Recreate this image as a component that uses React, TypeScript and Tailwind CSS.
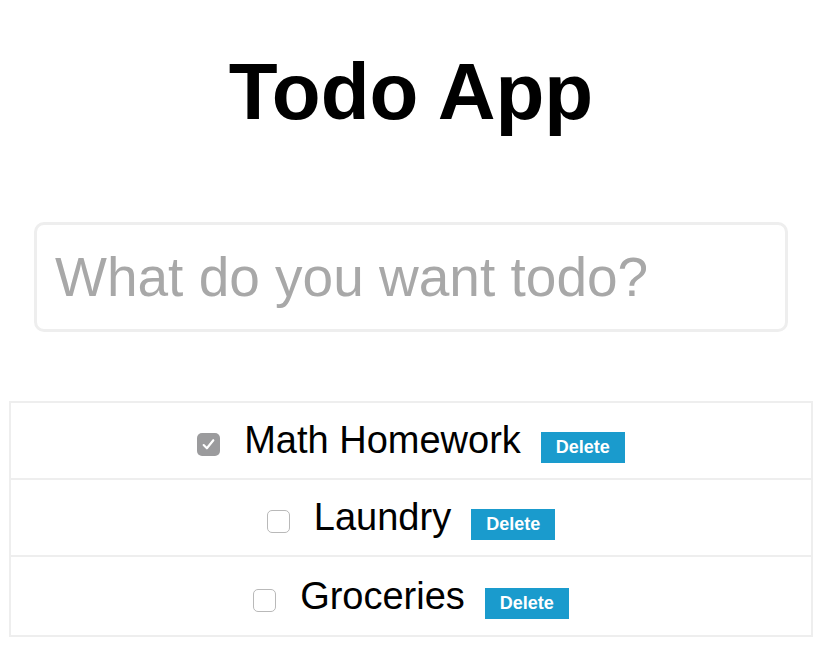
import { useState } from 'react';

type Todo = { id: number; text: string; done: boolean };

const initialTodos: Todo[] = [
  { id: 1, text: 'Math Homework', done: true },
  { id: 2, text: 'Laundry', done: false },
  { id: 3, text: 'Groceries', done: false },
];

function CheckBox({ checked, onToggle }: { checked: boolean; onToggle: () => void }) {
  return (
    <button
      onClick={onToggle}
      className={
        checked
          ? 'w-[23px] h-[23px] rounded-[5px] bg-[#9b9b9d] flex items-center justify-center'
          : 'w-[23px] h-[23px] rounded-[5px] bg-white border border-[#b9b9b9] flex items-center justify-center'
      }
    >
      {checked && (
        <svg width="15" height="15" viewBox="0 0 14 14" fill="none">
          <path d="M2.5 7.5 L5.5 10.5 L11.5 3" stroke="white" strokeWidth="2" strokeLinecap="round" strokeLinejoin="round" />
        </svg>
      )}
    </button>
  );
}

export default function App() {
  const [todos, setTodos] = useState<Todo[]>(initialTodos);
  const [text, setText] = useState('');

  const toggle = (id: number) =>
    setTodos(prev => prev.map(t => (t.id === id ? { ...t, done: !t.done } : t)));

  const remove = (id: number) => setTodos(prev => prev.filter(t => t.id !== id));

  return (
    <div className="min-h-screen bg-white text-black font-['Liberation_Sans',Arial,sans-serif]">
      {/* Title */}
      <h1 className="pt-[52px] text-center text-[80px] leading-none font-bold">Todo App</h1>

      {/* Input */}
      <div className="px-[34px] mt-[90px]">
        <input
          value={text}
          onChange={e => setText(e.target.value)}
          placeholder="What do you want todo?"
          className="w-full h-[110px] border-[3px] border-[#eeeeee] rounded-[10px] px-[18px] text-[55px] text-black placeholder:text-[#a8a8a8] outline-none"
        />
      </div>

      {/* List */}
      <ul className="mx-[9px] mt-[69px] border-2 border-[#eeeeee]">
        {todos.map((todo, i) => (
          <li
            key={todo.id}
            className={
              i < todos.length - 1
                ? 'h-[77px] flex items-center justify-center pt-[8px] border-b-2 border-[#eeeeee]'
                : 'h-[78px] flex items-center justify-center pt-[8px]'
            }
          >
            <CheckBox checked={todo.done} onToggle={() => toggle(todo.id)} />
            <span className="ml-[24px] mb-[9px] text-[38px] leading-none">{todo.text}</span>
            <button
              onClick={() => remove(todo.id)}
              className="ml-[20px] mt-[6px] h-[31px] px-[15px] bg-[#1a9bcd] text-white text-[18px] font-semibold"
            >
              Delete
            </button>
          </li>
        ))}
      </ul>
    </div>
  );
}
